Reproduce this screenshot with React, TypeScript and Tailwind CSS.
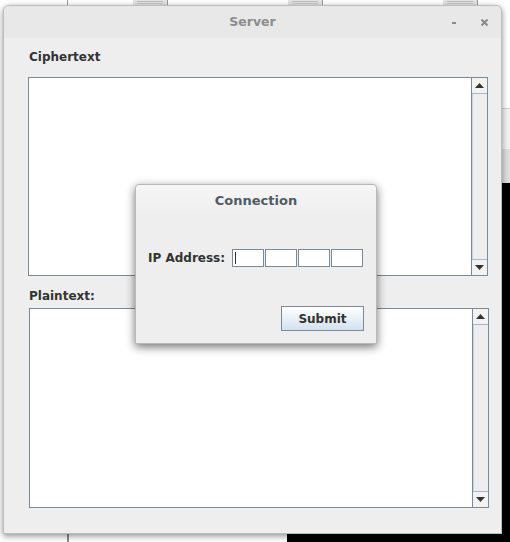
import type { ReactNode } from 'react';

const font = { fontFamily: '"DejaVu Sans", Verdana, sans-serif' };

function ArrowUp() {
  return (
    <svg width="9" height="5" viewBox="0 0 9 5" className="block">
      <path d="M0 5 L4.5 0 L9 5 Z" fill="#333" />
    </svg>
  );
}

function ArrowDown() {
  return (
    <svg width="9" height="5" viewBox="0 0 9 5" className="block">
      <path d="M0 0 L9 0 L4.5 5 Z" fill="#333" />
    </svg>
  );
}

function ScrollArea({ className }: { className?: string }) {
  return (
    <div className={`flex border border-[#7a8a99] bg-white ${className ?? ''}`}>
      <div className="flex-1" />
      <div className="flex w-[16px] flex-col border-l border-[#7a8a99] bg-[#eeeeee]">
        <div className="flex h-[16px] items-center justify-center border-b border-[#a3b8cc] bg-[#f2f2f2]">
          <ArrowUp />
        </div>
        <div className="flex-1 border-l border-[#c8d2dc]" />
        <div className="flex h-[16px] items-center justify-center border-t border-[#a3b8cc] bg-[#f2f2f2]">
          <ArrowDown />
        </div>
      </div>
    </div>
  );
}

function DocIcon() {
  return (
    <div className="flex h-[5px] w-[34px] flex-col gap-[1px] bg-[#e4e4e4] px-[4px] pt-[1px]">
      <div className="h-px bg-[#bdbdbd]" />
      <div className="h-px bg-[#c9c9c9]" />
    </div>
  );
}

function Label({ children }: { children: ReactNode }) {
  return <div className="text-[12px] font-bold leading-[16px] text-[#333333]">{children}</div>;
}

function ConnectionDialog() {
  return (
    <div className="absolute left-[135px] top-[184px] flex h-[160px] w-[242px] flex-col rounded-t-[4px] border border-[#b8b8b8] bg-[#eeeeee] shadow-[0_3px_10px_rgba(0,0,0,0.55)]">
      <div className="flex h-[31px] items-center justify-center rounded-t-[4px] bg-gradient-to-b from-[#f6f6f6] to-[#eeeeee] pt-[1px] text-[13px] font-bold text-[#4f5b66]">
        Connection
      </div>
      <div className="mt-[33px] flex items-center pl-[12px]">
        <span className="w-[84px] text-[12px] font-bold text-[#333333]">IP Address:</span>
        <div className="flex gap-[1px]">
          {[0, 1, 2, 3].map(i => (
            <div key={i} className="relative h-[18px] w-[32px] border border-[#7a8a99] bg-white">
              {i === 0 && <div className="absolute left-[2px] top-[2px] h-[12px] w-px bg-[#333]" />}
            </div>
          ))}
        </div>
      </div>
      <div className="mt-[39px] flex justify-end pr-[12px]">
        <button className="h-[25px] w-[83px] border border-[#7a8a99] bg-gradient-to-b from-[#ffffff] to-[#d3e1ef] text-[12px] font-bold text-[#333333]">
          Submit
        </button>
      </div>
    </div>
  );
}

export default function App() {
  return (
    <div className="relative h-[542px] w-[510px] overflow-hidden bg-white" style={font}>
      {/* desktop behind the window */}
      <div className="absolute left-0 top-0 flex h-[5px] w-full">
        <div className="w-[67px]" />
        <div className="w-px bg-[#9a9a9a]" />
        <div className="w-[65px]" />
        <DocIcon />
        <div className="w-px bg-[#9a9a9a]" />
        <div className="w-[120px]" />
        <DocIcon />
        <div className="w-px bg-[#9a9a9a]" />
        <div className="w-[120px]" />
        <DocIcon />
        <div className="w-px bg-[#9a9a9a]" />
      </div>
      <div className="absolute bottom-0 left-0 flex h-[8px] w-full">
        <div className="w-[67px]" />
        <div className="w-[2px] bg-[#8a8a8a]" />
        <div className="w-[218px]" />
        <div className="flex-1 bg-black" />
      </div>
      <div className="absolute right-0 top-[108px] flex h-[434px] w-[8px] flex-col">
        <div className="h-px bg-[#cfcfcf]" />
        <div className="h-[40px] bg-[#f2f2f2]" />
        <div className="h-[34px] bg-[#dedede]" />
        <div className="flex-1 bg-black" />
      </div>

      {/* main window */}
      <div className="absolute left-[3px] top-[5px] flex h-[529px] w-[499px] flex-col rounded-t-[6px] border border-[#bdbdbd] bg-[#eeeeee] shadow-[0_2px_6px_rgba(0,0,0,0.45)]">
        <div className="relative flex h-[32px] items-center justify-center rounded-t-[6px] bg-[#e8e8e8] text-[12.5px] font-bold text-[#8c8c8c]">
          Server
          <span className="absolute right-[45px] top-[16px] h-[2px] w-[4px] bg-[#8a8a8a]" />
          <svg width="7" height="7" viewBox="0 0 7 7" className="absolute right-[13px] top-[13px]">
            <path d="M0.5 0.5 L6.5 6.5 M6.5 0.5 L0.5 6.5" stroke="#8a8a8a" strokeWidth="2" />
          </svg>
        </div>
        <div className="flex flex-col px-[24px] pt-[11px]">
          <div className="pl-[1px]">
            <Label>Ciphertext</Label>
          </div>
          <ScrollArea className="mt-[12px] h-[199px] w-[460px]" />
          <div className="mt-[12px] pl-[1px]">
            <Label>Plaintext:</Label>
          </div>
          <ScrollArea className="ml-[1px] mt-[4px] h-[200px] w-[460px]" />
        </div>
      </div>

      <ConnectionDialog />
    </div>
  );
}
